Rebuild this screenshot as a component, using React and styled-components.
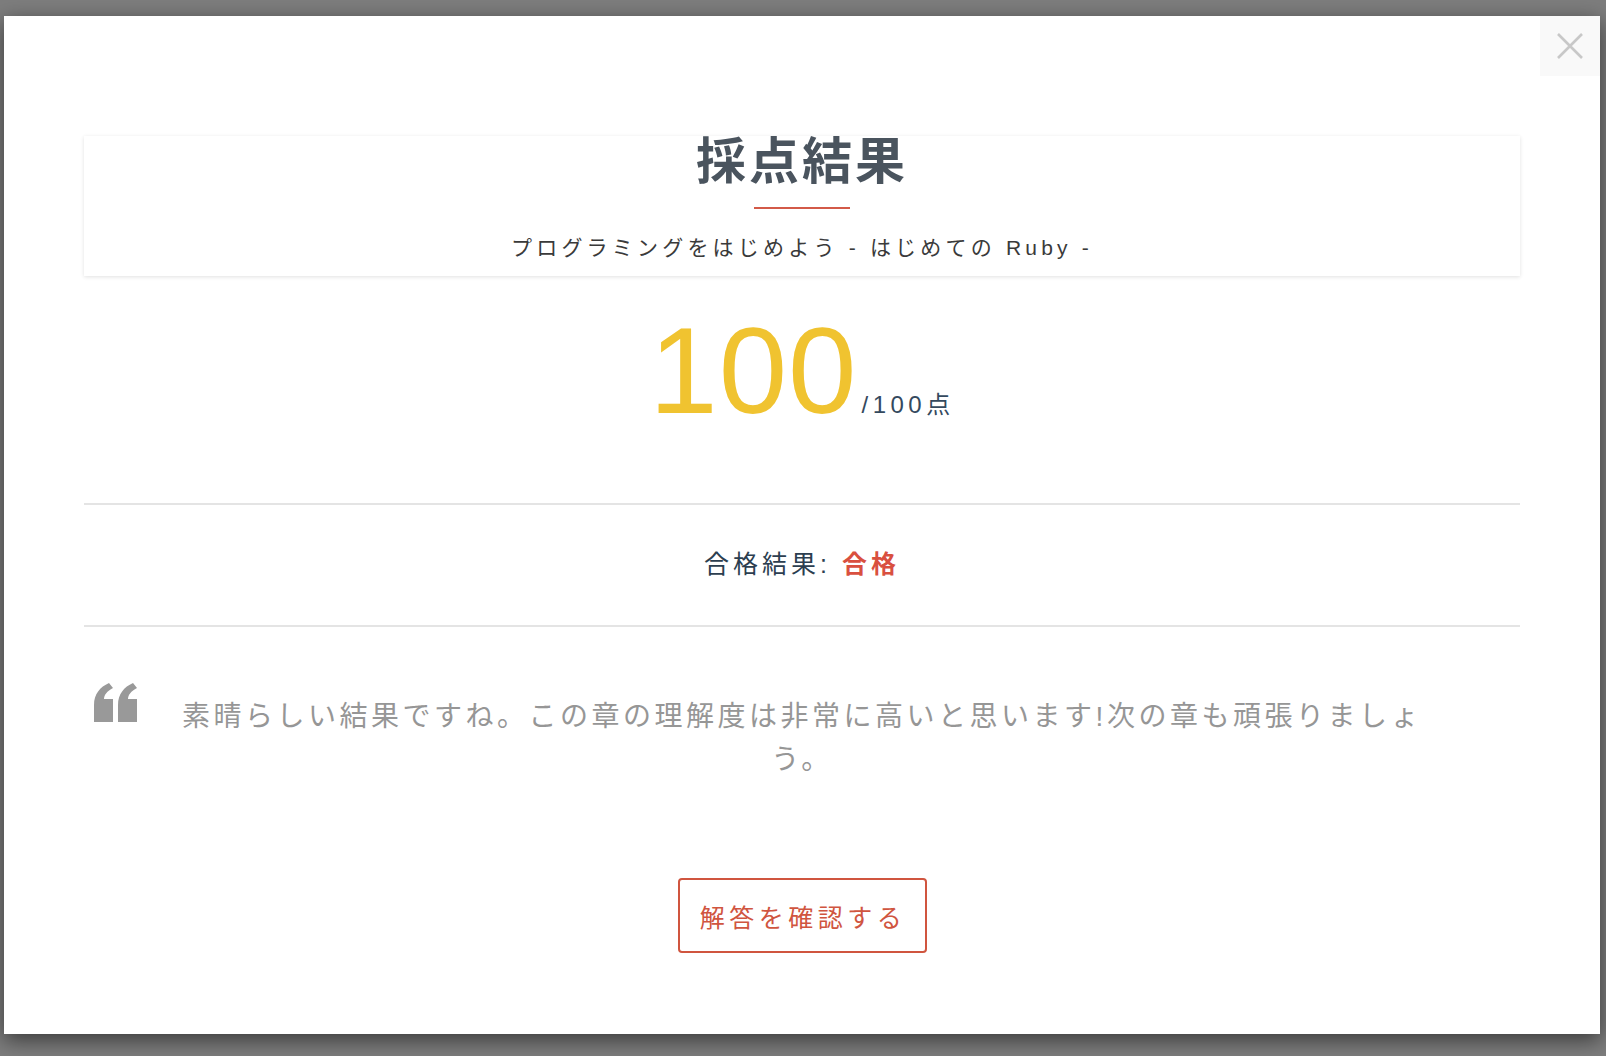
import React from 'react'
import styled, { createGlobalStyle } from "styled-components"


const GlobalStyle = createGlobalStyle`
    html, body {
        margin: 0;
        padding: 0;
        background: #7d7d7d;
        overflow: hidden;
    }
    body {
        font-family: "Liberation Sans", "Noto Sans CJK JP", sans-serif;
    }
`;

const Backdrop = styled.div`
    width: 1606px;
    height: 1056px;
    box-sizing: border-box;
    padding: 16px 6px 0 4px;
`;

const Modal = styled.div`
    position: relative;
    width: 1596px;
    height: 1018px;
    box-sizing: border-box;
    padding: 120px 80px 0;
    background: #ffffff;
    box-shadow: 0 6px 20px rgba(0, 0, 0, 0.55);
    display: flex;
    flex-direction: column;
`;

const CloseButton = styled.button`
    position: absolute;
    top: 0;
    right: 0;
    width: 60px;
    height: 60px;
    border: none;
    padding: 0;
    background: #f9f9f9;
    display: flex;
    align-items: center;
    justify-content: center;
    cursor: pointer;
`;

const HeaderCard = styled.div`
    height: 140px;
    background: #fff;
    box-shadow: 0 1px 4px rgba(0, 0, 0, 0.12);
    display: flex;
    flex-direction: column;
    align-items: center;
`;

const Title = styled.h1`
    margin: 0;
    font-size: 50px;
    line-height: 52px;
    font-weight: 700;
    letter-spacing: 3px;
    color: #4a545e;
`;

const RedLine = styled.span`
    display: block;
    width: 96px;
    height: 2px;
    margin-top: 19px;
    background: #d35a48;
`;

const Subtitle = styled.p`
    margin: 24px 0 0;
    font-size: 21px;
    line-height: 30px;
    letter-spacing: 4.2px;
    color: #3a3a3a;
`;

const ScoreRow = styled.div`
    margin-top: 33px;
    display: flex;
    justify-content: center;
    align-items: baseline;
    gap: 4px;
`;

const BigScore = styled.span`
    font-size: 123px;
    line-height: 1;
    letter-spacing: 1px;
    color: #f0c330;
`;

const MaxScore = styled.span`
    font-size: 24px;
    line-height: 1;
    letter-spacing: 4.5px;
    color: #34495e;
`;

const Divider = styled.hr`
    margin: ${p => p.$top || 0}px 0 0;
    height: 2px;
    border: none;
    background: #e4e4e4;
`;

const ResultRow = styled.div`
    height: 120px;
    box-sizing: border-box;
    padding-bottom: 6px;
    display: flex;
    align-items: center;
    justify-content: center;
    font-size: 25px;
    letter-spacing: 4px;
    color: #2c3e50;
`;

const Pass = styled.strong`
    font-weight: 700;
    color: #d9503f;
`;

const QuoteBlock = styled.div`
    margin-top: 68px;
    padding-left: 10px;
    display: flex;
    align-items: flex-start;
`;

const QuoteMark = styled.svg`
    flex: none;
    margin-top: -12px;
`;

const Comment = styled.p`
    margin: 0 0 0 23px;
    width: 1284px;
    font-size: 28px;
    line-height: 43px;
    letter-spacing: 3.5px;
    text-align: center;
    color: #969696;
`;

const ButtonWrap = styled.div`
    margin-top: 97px;
    display: flex;
    justify-content: center;
`;

const AnswerButton = styled.button`
    width: 249px;
    height: 75px;
    box-sizing: border-box;
    border: 2px solid #d0553f;
    border-radius: 4px;
    background: #fff;
    font-family: inherit;
    font-size: 25px;
    letter-spacing: 4.5px;
    padding: 0 0 0 2px;
    color: #d0553f;
    cursor: pointer;
`;


function App() {
  return (
    <>
      <GlobalStyle />
      <Backdrop>
        <Modal>
          <CloseButton aria-label="close">
            <svg width="26" height="26" viewBox="0 0 26 26">
              <path d="M1 1 L25 25 M25 1 L1 25" stroke="#c8c8c8" strokeWidth="2.6" />
            </svg>
          </CloseButton>

          <HeaderCard>
            <Title>採点結果</Title>
            <RedLine />
            <Subtitle>プログラミングをはじめよう - はじめての Ruby -</Subtitle>
          </HeaderCard>

          <ScoreRow>
            <BigScore>100</BigScore>
            <MaxScore>/100点</MaxScore>
          </ScoreRow>

          <Divider $top={71} />
          <ResultRow>
            合格結果:&nbsp;<Pass>合格</Pass>
          </ResultRow>
          <Divider />

          <QuoteBlock>
            <QuoteMark width="43" height="39" viewBox="0 0 43 39">
              <path fill="#999" d="M0 39 L0 22 C0 11 6 4 15 0 L19 5 C13 8 10 12 10 16 L19 16 L19 39 Z" />
              <path fill="#999" d="M24 39 L24 22 C24 11 30 4 39 0 L43 5 C37 8 34 12 34 16 L43 16 L43 39 Z" />
            </QuoteMark>
            <Comment>素晴らしい結果ですね。この章の理解度は非常に高いと思います!次の章も頑張りましょう。</Comment>
          </QuoteBlock>

          <ButtonWrap>
            <AnswerButton>解答を確認する</AnswerButton>
          </ButtonWrap>
        </Modal>
      </Backdrop>
    </>
  )
}

export default App
